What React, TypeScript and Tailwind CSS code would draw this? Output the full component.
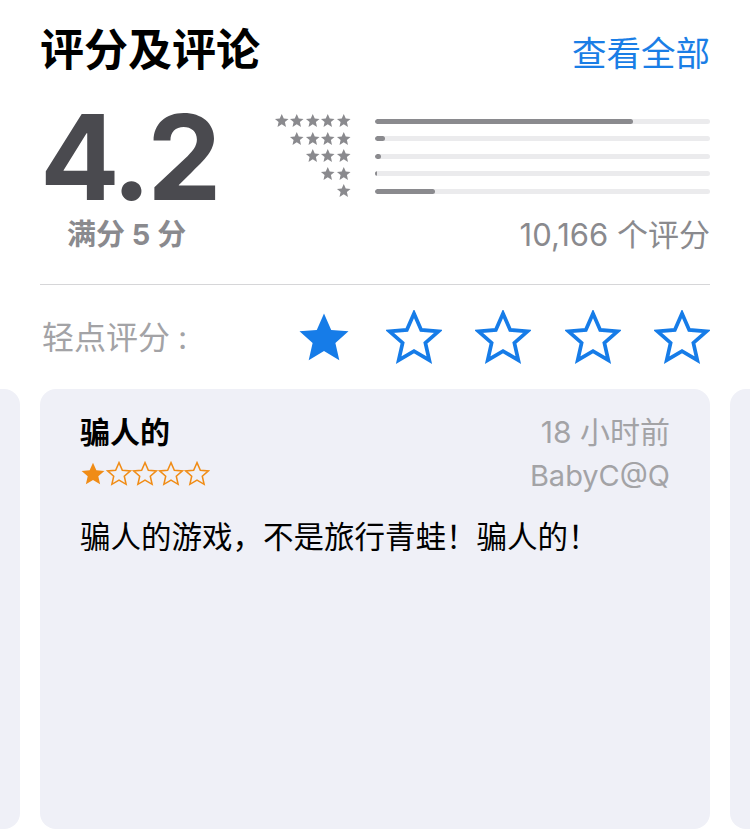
const STAR = "M12 1.5l3.09 7.02 7.41.64-5.62 4.93 1.68 7.41L12 17.6l-6.56 3.9 1.68-7.41L1.5 9.16l7.41-.64z";

function Star({ size, filled, color, stroke = 2 }: { size: number; filled: boolean; color: string; stroke?: number }) {
  return (
    <svg width={size} height={size} viewBox="0 0 24 24">
      <path
        d={STAR}
        fill={filled ? color : "none"}
        stroke={color}
        strokeWidth={filled ? 0 : stroke}
        strokeLinejoin="miter"
      />
    </svg>
  );
}

const bars = [
  { stars: 5, pct: 77 },
  { stars: 4, pct: 3 },
  { stars: 3, pct: 1.8 },
  { stars: 2, pct: 0.6 },
  { stars: 1, pct: 18 },
];

function Histogram() {
  return (
    <div className="flex flex-1 flex-col gap-[3.5px] pt-[13px]">
      {bars.map((b) => (
        <div key={b.stars} className="flex h-[14px] items-center">
          <div className="flex w-[99px] justify-end">
            {Array.from({ length: b.stars }).map((_, i) => (
              <Star key={i} size={15.5} filled color="#8a8a8e" />
            ))}
          </div>
          <div className="ml-[24px] h-[5px] flex-1 overflow-hidden rounded-full bg-[#ebebed]">
            <div className="h-full rounded-full bg-[#8a8a8e]" style={{ width: `${b.pct}%` }} />
          </div>
        </div>
      ))}
      <div className="mt-[17px] text-right text-[31px] leading-none text-[#8a8a8e]">10,166 个评分</div>
    </div>
  );
}

function Card({ children, className = "" }: { children?: React.ReactNode; className?: string }) {
  return <div className={"h-[440px] shrink-0 rounded-[16px] bg-[#eff0f7] " + className}>{children}</div>;
}

export default function App() {
  return (
    <div
      className="h-[836px] w-[750px] overflow-hidden bg-white"
      style={{ fontFamily: '"Inter", "Noto Sans CJK SC", sans-serif' }}
    >
      <div className="px-[40px] pt-[26px]">
        <div className="flex items-end justify-between">
          <h1 className="text-[44px] font-bold leading-[48px] text-black">评分及评论</h1>
          <div className="text-[34.5px] leading-[40px] text-[#1a7ee6]">查看全部</div>
        </div>

        <div className="mt-[33px] flex">
          <div className="flex w-[212px] flex-col items-start">
            <div className="text-[118px] font-bold leading-[100px] tracking-[-4px] text-[#4a4a4f]">4.2</div>
            <div className="mt-[13px] pl-[27px] text-[29px] font-bold leading-none text-[#8a8a8e]">满分 5 分</div>
          </div>
          <div className="-mt-[6px] flex flex-1">
            <Histogram />
          </div>
        </div>

        <div className="mt-[34px] h-px bg-[#d6d6d8]" />

        <div className="mt-[25px] flex items-center">
          <div className="w-[256px] pl-[2px] text-[32px] leading-none text-[#a3a3a6]">
            轻点评分<span className="ml-[8px]">:</span>
          </div>
          <div className="flex flex-1 justify-between">
            {[0, 1, 2, 3, 4].map((i) => (
              <Star key={i} size={56} filled={i === 0} color="#167ce8" stroke={1.6} />
            ))}
          </div>
        </div>
      </div>

      <div className="mt-[23px] flex gap-[20px]" style={{ marginLeft: -650 }}>
        <Card className="w-[670px]" />
        <Card className="w-[670px] px-[40px] pt-[24px]">
          <div className="flex justify-between">
            <div>
              <div className="text-[30px] font-bold leading-[38px] text-black">骗人的</div>
              <div className="mt-[10px] flex">
                {[0, 1, 2, 3, 4].map((i) => (
                  <Star key={i} size={26} filled={i === 0} color="#f08c16" stroke={1.4} />
                ))}
              </div>
            </div>
            <div className="text-right text-[29px] leading-[38px] text-[#a3a3a6]">
              <div className="text-[30px]">18 小时前</div>
              <div className="mt-[6px]">BabyC@Q</div>
            </div>
          </div>
          <div className="mt-[23px] text-[30.5px] leading-[38px] text-black">骗人的游戏，不是旅行青蛙！骗人的！</div>
        </Card>
        <Card className="w-[670px]" />
      </div>
    </div>
  );
}
